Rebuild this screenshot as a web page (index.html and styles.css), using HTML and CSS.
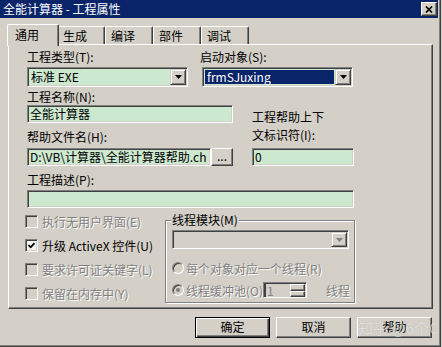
FILE: index.html
```html
<!DOCTYPE html>
<html lang="zh-CN">
<head>
<meta charset="utf-8">
<title>全能计算器 - 工程属性</title>
<link rel="stylesheet" href="styles.css">
</head>
<body>
<div class="window">
  <div class="titlebar">
    <span class="title">全能计算器 - 工程属性</span>
    <span class="close"><svg width="8" height="7" viewBox="0 0 8 7"><path d="M1 0.5 L7 6.5 M7 0.5 L1 6.5" stroke="#000" stroke-width="1.7" fill="none"/></svg></span>
  </div>
  <div class="content">
    <div class="tabs">
      <div class="tab active">通用</div>
      <div class="tab">生成</div>
      <div class="tab">编译</div>
      <div class="tab">部件</div>
      <div class="tab">调试</div>
    </div>
    <div class="panel">
      <div class="row1">
        <div class="col1">
          <div class="label">工程类型(T):</div>
          <div class="combo green">
            <span class="value">标准 EXE</span>
            <span class="dd"><svg width="7" height="4" viewBox="0 0 7 4"><path d="M0 0h7L3.5 4z" fill="#000"/></svg></span>
          </div>
        </div>
        <div class="col2">
          <div class="label shift">启动对象(S):</div>
          <div class="combo green">
            <span class="value selected">frmSJuxing</span>
            <span class="dd"><svg width="7" height="4" viewBox="0 0 7 4"><path d="M0 0h7L3.5 4z" fill="#000"/></svg></span>
          </div>
        </div>
      </div>
      <div class="grid2">
        <div class="label lbl-n">工程名称(N):</div>
        <div class="edit name-edit">全能计算器</div>
        <div class="label lbl-h">帮助文件名(H):</div>
        <div class="help-row">
          <div class="edit help-edit">D:\VB\计算器\全能计算器帮助.ch</div>
          <div class="small-btn">...</div>
        </div>
        <div class="ctx-label">工程帮助上下<br>文标识符(I):</div>
        <div class="edit ctx-edit">0</div>
      </div>
      <div class="label lbl-p">工程描述(P):</div>
      <div class="edit desc-edit"></div>
      <div class="lower">
        <div class="checks">
          <div class="check disabled"><span class="box"></span><span class="ctext">执行无用户界面(E)</span></div>
          <div class="check"><span class="box on"><svg width="7" height="7" viewBox="0 0 7 7"><path d="M0.5 3 L2.7 5.3 L6.5 1.2" stroke="#000" stroke-width="1.8" fill="none"/></svg></span><span class="ctext">升级 ActiveX 控件(U)</span></div>
          <div class="check disabled"><span class="box"></span><span class="ctext">要求许可证关键字(L)</span></div>
          <div class="check disabled"><span class="box"></span><span class="ctext">保留在内存中(Y)</span></div>
        </div>
        <div class="group">
          <div class="group-title">线程模块(M)</div>
          <div class="combo gcombo">
            <span class="value"></span>
            <span class="dd"><svg width="7" height="4" viewBox="0 0 7 4"><path d="M0 0h7L3.5 4z" fill="#808080"/></svg></span>
          </div>
          <div class="radio-row first"><span class="radio"></span><span class="rtext">每个对象对应一个线程(R)</span></div>
          <div class="radio-row"><span class="radio on"><span class="dot"></span></span><span class="rtext fixed">线程缓冲池(O)</span>
            <div class="spin"><span class="spin-val">1</span><span class="spin-btns"><span class="sb"></span><span class="sb"></span></span></div>
            <span class="rtext unit">线程</span>
          </div>
        </div>
      </div>
    </div>
    <div class="buttons">
      <div class="btn default">确定</div>
      <div class="btn">取消</div>
      <div class="btn help">帮助<span class="wm">知乎 @6个C</span></div>
    </div>
  </div>
</div>
</body>
</html>
```

FILE: styles.css
```css
* { box-sizing: border-box; }
body {
  margin: 0;
  background: #d4d0c8;
  font-family: "Noto Sans CJK SC", "Noto Sans", sans-serif;
  font-size: 12px;
  color: #000;
}
.window {
  width: 441px;
  height: 347px;
  background: #d4d0c8;
  border-right: 1px solid #404040;
  border-bottom: 1px solid #404040;
  box-shadow: inset -1px -1px #808080;
  padding-right: 2px;
  overflow: hidden;
}
.titlebar {
  height: 18px;
  background: #0a246a;
  display: flex;
  align-items: center;
  justify-content: space-between;
  padding: 0 1px 0 3px;
  color: #fff;
}
.title { font-size: 12px; line-height: 18px; white-space: nowrap; }
.close {
  width: 16px;
  height: 14px;
  background: #d4d0c8;
  border: 1px solid;
  border-color: #fff #404040 #404040 #fff;
  box-shadow: inset -1px -1px #808080;
  display: flex;
  align-items: center;
  justify-content: center;
}
.content { padding: 6px 5px 0 8px; }
.tabs {
  display: flex;
  align-items: flex-end;
  height: 20px;
  margin-left: -1px;
}
.tab {
  width: 48px;
  height: 18px;
  border-top: 1px solid #fff;
  border-left: 1px solid #fff;
  border-right: 1px solid #404040;
  box-shadow: inset -1px 0 #808080;
  border-top-left-radius: 2px;
  border-top-right-radius: 2px;
  padding-left: 5px;
  line-height: 17px;
  white-space: nowrap;
}
.tab.active {
  width: 52px;
  height: 22px;
  margin-right: -2px;
  margin-bottom: -2px;
  position: relative;
  z-index: 1;
  background: #d4d0c8;
  padding-left: 7px;
  line-height: 19px;
}
.panel {
  height: 265px;
  border: 1px solid;
  border-color: #fff #404040 #404040 #fff;
  box-shadow: inset -1px -1px #808080;
  padding: 5px 0 0 18px;
}
.label { height: 14px; line-height: 14px; white-space: nowrap; }
.label.shift { margin-left: -2px; }
.row1 { display: flex; gap: 14px; }
.col1 { width: 161px; }
.col2 { width: 151px; }
.combo {
  margin-top: 3px;
  height: 20px;
  display: flex;
  border: 1px solid;
  border-color: #808080 #fff #fff #808080;
  box-shadow: inset 1px 1px #404040, inset -1px -1px #d4d0c8;
  padding: 1px;
  background: #d4d0c8;
}
.combo.green { background: #cce8cf; }
.combo .value {
  flex: 1;
  line-height: 16px;
  padding-left: 2px;
  white-space: nowrap;
  overflow: hidden;
}
.combo .value.selected {
  background: #0a246a;
  color: #fff;
  margin: 1px;
  line-height: 14px;
  overflow: visible;
}
.dd {
  width: 16px;
  height: 16px;
  background: #d4d0c8;
  border: 1px solid;
  border-color: #d4d0c8 #404040 #404040 #d4d0c8;
  box-shadow: inset 1px 1px #fff, inset -1px -1px #808080;
  display: flex;
  align-items: center;
  justify-content: center;
}
.grid2 {
  display: grid;
  grid-template-columns: 206px 102px;
  column-gap: 19px;
}
.lbl-n { grid-column: 1; grid-row: 1; margin-top: 3px; }
.name-edit { grid-column: 1; grid-row: 2; margin-top: 1px; }
.lbl-h { grid-column: 1; grid-row: 3; margin-top: 7px; }
.help-row { grid-column: 1; grid-row: 4; margin-top: 4px; display: flex; }
.ctx-label {
  grid-column: 2;
  grid-row: 2 / 4;
  align-self: end;
  line-height: 18px;
  white-space: nowrap;
}
.ctx-edit { grid-column: 2; grid-row: 4; margin-top: 4px; }
.edit {
  height: 18px;
  border: 1px solid;
  border-color: #808080 #fff #fff #808080;
  box-shadow: inset 1px 1px #404040, inset -1px -1px #d4d0c8;
  background: #cce8cf;
  padding: 0 2px;
  line-height: 16px;
  overflow: hidden;
  white-space: nowrap;
}
.help-edit { width: 184px; }
.small-btn {
  width: 22px;
  height: 18px;
  border: 1px solid;
  border-color: #fff #404040 #404040 #fff;
  box-shadow: inset -1px -1px #808080;
  text-align: center;
  line-height: 14px;
}
.lbl-p { margin-top: 7px; }
.desc-edit { margin-top: 3px; width: 327px; }
.lower { display: flex; margin-left: -2px; align-items: flex-start; }
.checks { width: 140px; margin-top: 1px; }
.check {
  height: 24px;
  display: flex;
  align-items: center;
  gap: 4px;
  white-space: nowrap;
}
.box {
  width: 13px;
  height: 13px;
  border: 1px solid;
  border-color: #808080 #fff #fff #808080;
  box-shadow: inset 1px 1px #404040, inset -1px -1px #d4d0c8;
  background: #d4d0c8;
  display: flex;
  align-items: center;
  justify-content: center;
  flex: none;
}
.box.on { background: #f4f4f2; }
.disabled .ctext, .rtext {
  color: #808080;
  text-shadow: 1px 1px #fff;
}
.group {
  width: 190px;
  height: 83px;
  margin-top: 12px;
  border: 1px solid #808080;
  box-shadow: inset 1px 1px #fff, 1px 1px #fff;
  padding-left: 5px;
}
.group-title {
  width: max-content;
  margin-top: -8px;
  padding: 0 1px;
  background: #d4d0c8;
  line-height: 14px;
  white-space: nowrap;
}
.gcombo { margin-left: 1px; width: 177px; height: 19px; }
.gcombo .dd { height: 15px; }
.radio-row {
  height: 22px;
  display: flex;
  align-items: center;
  white-space: nowrap;
}
.radio-row.first { margin-top: 8px; }
.radio {
  margin-left: 1px;
  width: 12px;
  height: 12px;
  border-radius: 50%;
  border: 1px solid;
  border-color: #808080 #fff #fff #808080;
  box-shadow: inset 1px 1px #404040;
  background: #d4d0c8;
  display: flex;
  align-items: center;
  justify-content: center;
  flex: none;
}
.dot { width: 4px; height: 4px; border-radius: 50%; background: #808080; }
.rtext { margin-left: 2px; }
.rtext.fixed { width: 77px; overflow: visible; }
.spin {
  width: 44px;
  height: 16px;
  border: 1px solid;
  border-color: #808080 #fff #fff #808080;
  box-shadow: inset 1px 1px #404040;
  background: #d4d0c8;
  display: flex;
  padding: 1px 1px 0 1px;
}
.spin-val {
  flex: 1;
  color: #808080;
  line-height: 13px;
  padding-left: 1px;
  border-left: 1px solid #404040;
}
.spin-btns { width: 15px; display: flex; flex-direction: column; }
.sb {
  flex: 1;
  border: 1px solid;
  border-color: #fff #404040 #404040 #fff;
  box-shadow: inset -1px -1px #808080;
}
.rtext.unit { margin-left: 19px; }
.buttons {
  display: flex;
  justify-content: flex-end;
  gap: 6px;
  margin-top: 8px;
  margin-right: 1px;
}
.btn {
  width: 75px;
  height: 21px;
  border: 1px solid;
  border-color: #fff #404040 #404040 #fff;
  box-shadow: inset -1px -1px #808080;
  text-align: center;
  line-height: 18px;
  position: relative;
}
.btn.default {
  border: 1px solid #000;
  box-shadow: inset 1px 1px #fff, inset -1px -1px #404040, inset -2px -2px #808080;
}
.wm {
  position: absolute;
  left: 0;
  top: 1px;
  font-size: 15px;
  line-height: 18px;
  white-space: nowrap;
  color: rgba(255, 255, 255, 0.6);
  text-shadow: 0 0 1px rgba(0, 0, 0, 0.2);
}
```
